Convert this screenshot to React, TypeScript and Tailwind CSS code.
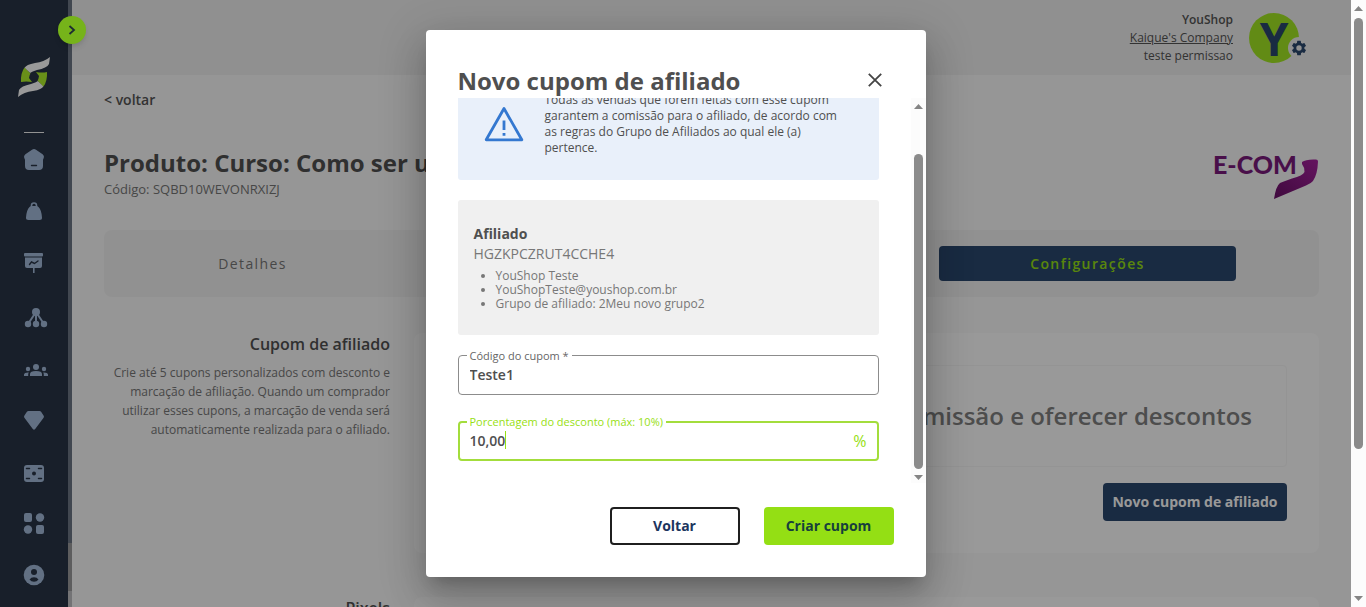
import type { ReactNode } from "react";

const navItems: { label: string; icon: ReactNode }[] = [
  {
    label: "Início",
    icon: (
      <>
        <path d="M18 10.8q2-1.4 4 0l6.600 4.400q2 1.500 1.200 3.600l-.8 2v6.200q0 4-4 4H15q-4 0-4-4v-6.200l-.8-2q-.8-2.100 1.200-3.600z" />
        <path d="M17.500 26.500h5" stroke="#283446" strokeWidth="1.400" strokeLinecap="round" />
      </>
    ),
  },
  {
    label: "Produtos",
    icon: (
      <>
        <path d="M15.500 16q.8-1 2.500-1h4q1.700 0 2.500 1 3 3 3.500 10.500.2 2.500-2.500 2.500h-11q-2.700 0-2.500-2.500.5-7.500 3.500-10.500z" />
        <path d="M17.500 16v-1.500a2.500 2.500 0 0 1 5 0V16" fill="none" stroke="#a4bbdb" strokeWidth="1.600" />
      </>
    ),
  },
  {
    label: "Relatórios",
    icon: (
      <>
        <rect x="10" y="10" width="19" height="3.500" rx="1" />
        <path d="M11 14.500h17V23q0 2-2 2H13q-2 0-2-2z" />
        <path d="M19 25h1.600v5H19z" />
        <path d="m15.500 21.500 2-2.500 3 1.500 3.500-2.500" fill="none" stroke="#283446" strokeWidth="1.400" strokeLinecap="round" />
      </>
    ),
  },
  {
    label: "Rede",
    icon: (
      <>
        <path d="M22 17 14 29M22 17v12M22 17l8 12" stroke="#a4bbdb" strokeWidth="2" />
        <circle cx="22" cy="17" r="4" />
        <circle cx="14" cy="29" r="3.200" />
        <circle cx="22" cy="29" r="3.200" />
        <circle cx="30" cy="29" r="3.200" />
      </>
    ),
  },
  {
    label: "Afiliados",
    icon: (
      <>
        <circle cx="22" cy="20" r="3" />
        <circle cx="14" cy="22" r="2.200" />
        <circle cx="30" cy="22" r="2.200" />
        <path d="M16 29v-2q0-3 6-3t6 3v2zM10 29v-1.500q.3-2.300 4.800-2.100-.6.800-.6 1.900V29zM34 29v-1.500q-.3-2.300-4.800-2.100.6.800.6 1.900V29z" />
      </>
    ),
  },
  {
    label: "Premium",
    icon: <path d="M14.500 12h11q1 0 1.600.8l2.600 4q.6 1-.1 1.900L21.200 30q-1.200 1.400-2.400 0l-8.400-11.300q-.7-.9-.1-1.900l2.600-4q.6-.8 1.600-.8z" />,
  },
  {
    label: "Cupons",
    icon: (
      <>
        <rect x="10" y="14" width="20" height="17" rx="3" />
        <circle cx="20" cy="22.500" r="2" fill="#283446" />
        <path d="M12.500 17.500h3M24.500 17.500h3M12.500 27.500h3M24.500 27.500h3" stroke="#283446" strokeWidth="1.500" strokeLinecap="round" />
      </>
    ),
  },
  {
    label: "Aplicativos",
    icon: (
      <>
        <rect x="10" y="10" width="8" height="9" rx="2" />
        <circle cx="26" cy="14.500" r="4.200" />
        <circle cx="14" cy="26.500" r="4.200" />
        <rect x="22" y="22" width="8" height="9" rx="2" />
      </>
    ),
  },
  {
    label: "Conta",
    icon: (
      <>
        <circle cx="20" cy="20" r="10.300" />
        <circle cx="20" cy="17" r="3" fill="#283446" />
        <path d="M15.500 24.500q1.500-2.300 4.500-2.300t4.500 2.300q-1.700 2.200-4.500 2.200t-4.500-2.200z" fill="#283446" />
      </>
    ),
  },
];

function Sidebar() {
  return (
    <aside className="flex shrink-0">
      <div className="flex w-[68px] flex-col items-center bg-[#283446]">
        <svg className="mt-14 h-11 w-9" viewBox="0 0 36 44" aria-label="Logo">
          <path d="M34 1Q28 6 19 7 10 8.500 8.500 12l5.500 5q2-1.500 7-3 10-2 12-6z" fill="#fff" />
          <path d="M8.500 11.500Q4.500 17 5 26q5-1 11 0l-3-4q.5-3.500 1.500-4.500z" fill="#aff02a" />
          <path d="M2 41q6-5 15-6 9-1.500 10.500-5L22 25q-2 1.500-7 3-10 2-12 6z" fill="#fff" />
          <path d="M27.500 30.500Q31.500 25 31 16q-5 1-11 0l3 4q-.5 3.500-1.500 4.500z" fill="#aff02a" />
        </svg>
        <div className="mt-8 h-px w-5 bg-[#f4f4f4]" />
        <nav className="flex flex-col">
          {navItems.map((item) => (
            <a key={item.label} href="#" aria-label={item.label} className="flex h-[52px] w-10 items-center">
              <svg width="40" height="40" viewBox="0 0 40 40" fill="#a4bbdb">
                {item.icon}
              </svg>
            </a>
          ))}
        </nav>
      </div>
      <div className="flex w-1 flex-col bg-[#c0c0c4]">
        <div className="grow bg-[#6d7785]" />
        <div className="h-12 bg-[#9b9b9d]" />
        <div className="h-4" />
      </div>
    </aside>
  );
}

function GearIcon() {
  return (
    <svg width="18" height="18" viewBox="0 0 24 24" fill="#2b486e">
      <path d="M19.140 12.940c.04-.3.060-.61.060-.94s-.02-.64-.07-.94l2.030-1.580a.49.49 0 0 0 .12-.61l-1.920-3.320a.49.49 0 0 0-.59-.22l-2.390.96a7 7 0 0 0-1.620-.94l-.36-2.540a.48.48 0 0 0-.48-.41h-3.840a.47.47 0 0 0-.47.410l-.36 2.540c-.59.24-1.130.57-1.620.94l-2.390-.96a.48.48 0 0 0-.59.220L2.740 8.870a.47.47 0 0 0 .12.610l2.030 1.580c-.05.3-.09.630-.09.940s.02.640.07.940l-2.030 1.580a.49.49 0 0 0-.12.610l1.920 3.320c.12.220.37.290.59.220l2.390-.96c.5.380 1.030.7 1.620.940l.36 2.540c.05.240.24.410.48.410h3.840c.24 0 .44-.17.470-.41l.36-2.540c.59-.24 1.130-.56 1.620-.94l2.390.96c.22.080.47 0 .59-.22l1.920-3.320a.47.47 0 0 0-.12-.61zM12 15.600a3.600 3.600 0 1 1 0-7.200 3.600 3.600 0 0 1 0 7.200z" />
    </svg>
  );
}

function TopBar() {
  return (
    <header className="flex h-[75px] shrink-0 justify-end bg-[#f0f0f0] pr-[52px]">
      <div className="pt-[11px] text-right text-xs leading-[18px] text-[#555]">
        <div className="font-semibold">YouShop</div>
        <div>
          <a href="#" className="underline">Kaique's Company</a>
        </div>
        <div>teste permissao</div>
      </div>
      <div className="relative mt-[13px] ml-4 flex size-[50px] items-center justify-center rounded-full bg-[#a4e824]">
        <span className="text-[46px] leading-none font-bold text-[#2b486e]">Y</span>
        <button aria-label="Configurações da conta" className="absolute -right-[11px] bottom-1 flex size-[22px] items-center justify-center rounded-full bg-[#f0f0f0]">
          <GearIcon />
        </button>
      </div>
    </header>
  );
}

function BrandLogo() {
  return (
    <div className="relative h-[50px] w-[106px] font-['Lato'] text-[25px] leading-[28px] font-black text-[#7b1a7c]">
      E-COM
      <svg className="absolute right-0 bottom-0" width="46" height="44" viewBox="0 0 46 44">
        <defs>
          <linearGradient id="swoosh" x1="1" y1="0" x2="0" y2="1">
            <stop offset="0" stopColor="#a8229f" />
            <stop offset="1" stopColor="#6a1168" />
          </linearGradient>
        </defs>
        <path d="M29 6q4-3 14-2.500 2 0 2 2-.5 13-5 19.500-2 2.500-7 4.500L1 43q2-13 6-16 3-1.500 12-4.500 11-3 12.500-6.500Q32 12 29 8z" fill="url(#swoosh)" />
      </svg>
    </div>
  );
}

function Page() {
  return (
    <main className="flex grow flex-col bg-[#fafafa] px-8">
      <a href="#" className="mt-[15px] self-start text-sm leading-5 font-semibold text-[#555]">&lt; voltar</a>
      <div className="mt-9 flex justify-between">
        <div className="whitespace-nowrap">
          <h1 className="text-2xl leading-[34px] font-bold text-[#505050]">Produto: Curso: Como ser um</h1>
          <p className="text-[13px] leading-[18px] text-[#777]">Código: SQBD10WEVONRXIZJ</p>
        </div>
        <div className="mt-1">
          <BrandLogo />
        </div>
      </div>
      <div className="mt-[30px] flex h-[67px] shrink-0 items-center justify-between rounded-lg bg-[#f2f2f2] pr-[83px] text-sm">
        <button className="h-[35px] w-[297px] tracking-widest text-[#777]">Detalhes</button>
        <button className="h-[35px] w-[297px] rounded bg-[#2b486e] font-semibold tracking-widest text-[#97e013]">Configurações</button>
      </div>
      <section className="mt-9 flex gap-6">
        <div className="w-[286px] shrink-0 text-right">
          <h2 className="text-base leading-[22px] font-semibold text-[#505050]">Cupom de afiliado</h2>
          <p className="mt-2 text-xs leading-[19px] text-[#777]">
            Crie até 5 cupons personalizados com desconto e marcação de afiliação. Quando um comprador utilizar esses cupons, a marcação de venda será automaticamente realizada para o afiliado.
          </p>
        </div>
        <div className="flex grow flex-col items-end rounded-lg bg-white p-8">
          <div className="flex h-[102px] w-full items-center justify-end rounded border border-[#f7f7f7] pr-[34px] text-2xl font-semibold text-[#808080]">
            comissão e oferecer descontos
          </div>
          <button className="mt-4 h-[38px] w-[184px] rounded bg-[#2b486e] text-sm font-bold whitespace-nowrap text-white">
            Novo cupom de afiliado
          </button>
        </div>
      </section>
      <section className="mt-11 flex gap-6">
        <div className="w-[286px] shrink-0 text-right">
          <h2 className="text-base leading-[22px] font-semibold text-[#505050]">Pixels</h2>
        </div>
        <div className="h-40 grow rounded-lg bg-white" />
      </section>
    </main>
  );
}

function Arrow({ up }: { up?: boolean }) {
  return (
    <svg className="shrink-0" width="9" height="5" viewBox="0 0 9 5" fill="#858585">
      <path d={up ? "M0 5 4.500 0 9 5z" : "M0 0h9L4.500 5z"} />
    </svg>
  );
}

function CouponDialog() {
  return (
    <div role="dialog" aria-labelledby="dialog-title" className="flex max-h-[calc(100vh-60px)] w-[500px] flex-col rounded bg-white text-[#4f4f4f] shadow-[0_11px_15px_-7px_rgba(0,0,0,0.2),0_24px_38px_3px_rgba(0,0,0,0.14),0_9px_46px_8px_rgba(0,0,0,0.12)]">
      <div className="flex h-[68px] shrink-0 items-end justify-between pr-[39px] pl-8">
        <h2 id="dialog-title" className="text-2xl leading-[34px] font-bold">Novo cupom de afiliado</h2>
        <button aria-label="Fechar" className="mb-1.5 flex size-6 items-center justify-center">
          <svg width="14" height="14" viewBox="0 0 14 14" stroke="#444" strokeWidth="1.800">
            <path d="m.8.8 12.400 12.400M13.200.8.800 13.200" />
          </svg>
        </button>
      </div>
      <div className="flex min-h-0">
        <div className="flex min-h-0 grow flex-col justify-end gap-5 overflow-hidden px-8 pb-[22px]">
          <div className="flex shrink-0 items-center rounded-[3px] bg-[#e9f0fa] py-6 pr-7 pl-[26px]">
            <svg className="shrink-0" width="40" height="36" viewBox="0 0 40 36" fill="none" stroke="#3478d0" strokeWidth="2.800">
              <path d="M20 2.500 37.800 33.800H2.200z" strokeLinejoin="round" />
              <path d="M20 14.500v9.500M20 27v2.800" strokeWidth="2.800" />
            </svg>
            <p className="ml-[21px] text-xs leading-4">
              Todas as vendas que forem feitas com esse cupom garantem a comissão para o afiliado, de acordo com as regras do Grupo de Afiliados ao qual ele (a) pertence.
            </p>
          </div>
          <div className="shrink-0 rounded-[3px] bg-[#f0f0f0] px-4 py-6">
            <h3 className="text-sm leading-5 font-bold">Afiliado</h3>
            <p className="text-sm leading-5 text-[#777]">HGZKPCZRUT4CCHE4</p>
            <ul className="mt-[5px] list-disc pl-[22px] text-xs leading-[14px] text-[#777]">
              <li>YouShop Teste</li>
              <li>YouShopTeste@youshop.com.br</li>
              <li>Grupo de afiliado: 2Meu novo grupo2</li>
            </ul>
          </div>
          <div className="relative h-10 shrink-0">
            <label htmlFor="codigo" className="absolute -top-[7px] left-[9px] bg-white px-[3px] text-[11px] leading-4 text-[#666]">Código do cupom *</label>
            <input id="codigo" defaultValue="Teste1" className="size-full rounded border border-[#8c8c8c] px-[11px] pb-[2px] text-sm font-semibold outline-none" />
          </div>
          <div className="relative mt-1.5 h-10 shrink-0">
            <label htmlFor="desconto" className="absolute -top-[7px] left-[9px] bg-white px-[3px] text-[11px] leading-4 text-[#97e013]">Porcentagem do desconto (máx: 10%)</label>
            <input id="desconto" defaultValue="10,00" className="size-full rounded border-2 border-[#a3dd3c] px-[10px] pb-[2px] text-sm font-semibold outline-none" />
            <span className="absolute top-[10px] left-[47px] h-[18px] w-px bg-[#97e013]" />
            <span className="absolute top-[10px] right-3 text-base leading-5 text-[#97e013]">%</span>
          </div>
        </div>
        <div className="flex w-[15px] shrink-0 flex-col items-center bg-[#fcfcfc] pt-1.5 pb-[3px]">
          <Arrow up />
          <div className="mt-[45px] mb-[6px] w-[9px] grow rounded-full bg-[#8b8b8b]" />
          <Arrow />
        </div>
      </div>
      <div className="flex shrink-0 justify-end gap-6 px-8 pt-6 pb-8 text-sm font-bold text-[#1c355e]">
        <button className="h-[38px] w-[130px] rounded border-2 border-[#1f1f1f] bg-white">Voltar</button>
        <button className="h-[38px] w-[130px] rounded bg-[#94df14] text-[#173f3c]">Criar cupom</button>
      </div>
    </div>
  );
}

export default function App() {
  return (
    <div className="flex h-screen overflow-hidden font-['Open_Sans','Noto_Sans',sans-serif]">
      <div className="relative flex min-w-0 grow overflow-hidden">
        <Sidebar />
        <div className="flex min-w-0 grow flex-col">
          <TopBar />
          <Page />
        </div>
        <div className="absolute inset-0 flex items-center justify-center bg-black/40">
          <CouponDialog />
        </div>
        <button aria-label="Expandir menu" className="absolute top-4 left-[58px] flex size-7 items-center justify-center rounded-full bg-[#76b31a] shadow-md">
          <svg width="8" height="10" viewBox="0 0 8 10" fill="none" stroke="#1d2c33" strokeWidth="1.800">
            <path d="m1.500 1 4.500 4-4.500 4" />
          </svg>
        </button>
      </div>
      <div className="flex w-[15px] shrink-0 flex-col items-center bg-[#fcfcfc] py-[6px]">
        <Arrow up />
        <div className="mt-[7px] h-[431px] w-[9px] rounded-full bg-[#8b8b8b]" />
        <div className="mt-auto">
          <Arrow />
        </div>
      </div>
    </div>
  );
}
